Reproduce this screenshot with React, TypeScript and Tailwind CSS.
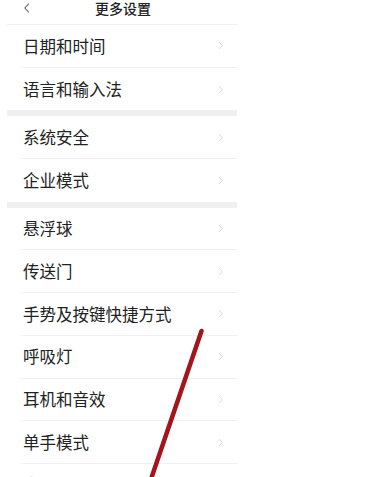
import React from "react";

const groups: string[][] = [
  ["日期和时间", "语言和输入法"],
  ["系统安全", "企业模式"],
  ["悬浮球", "传送门", "手势及按键快捷方式", "呼吸灯", "耳机和音效", "单手模式", "全面屏"],
];

function Chevron() {
  return (
    <svg width="6" height="9" viewBox="0 0 6 9" className="shrink-0">
      <path d="M1.4 1.3 L4.4 4.5 L1.4 7.7" fill="none" stroke="#dadada" strokeWidth="1" strokeLinecap="round" strokeLinejoin="round" />
    </svg>
  );
}

function Row({ label, last, faded }: { label: string; last: boolean; faded?: boolean }) {
  return (
    <div className="pl-[13px]">
      <div className={`h-[42.7px] flex items-center justify-between pl-[3px] pr-[13px] ${last ? "" : "border-b border-[#f1f1f1]"}`}>
        <span className={`text-[16.5px] leading-none ${faded ? "text-[#d6d6d6]" : "text-[#222222]"}`}>{label}</span>
        <Chevron />
      </div>
    </div>
  );
}

export default function App() {
  return (
    <div
      className="relative w-[376px] h-[477px] overflow-hidden bg-white"
      style={{ fontFamily: '"Noto Sans CJK SC", "Noto Sans", sans-serif' }}
    >
      <div className="ml-[7px] w-[230px] bg-white">
        <div className="relative h-[25px] flex items-start justify-center pt-[1px] border-b border-[#f1f1f1]">
          <svg width="8" height="10" viewBox="0 0 8 10" className="absolute left-[16px] top-[3px]">
            <path d="M5.5 1 L1.8 5 L5.5 9" fill="none" stroke="#555" strokeWidth="1.1" strokeLinecap="round" strokeLinejoin="round" />
          </svg>
          <span className="text-[14px] leading-[15px] text-[#222] font-medium ml-[2px]">更多设置</span>
        </div>
        {groups.map((g, gi) => (
          <div key={gi}>
            {gi > 0 && <div className="h-[6px] bg-[#f0f0f0]" />}
            {g.map((label, i) => (
              <Row key={label} label={label} last={i === g.length - 1 && gi < groups.length - 1} faded={label === "全面屏"} />
            ))}
          </div>
        ))}
      </div>
      <svg className="absolute left-0 top-0 pointer-events-none" width="376" height="477" viewBox="0 0 376 477">
        <line x1="201.5" y1="331" x2="150" y2="482" stroke="#a3141b" strokeWidth="4.5" strokeLinecap="round" />
      </svg>
    </div>
  );
}
